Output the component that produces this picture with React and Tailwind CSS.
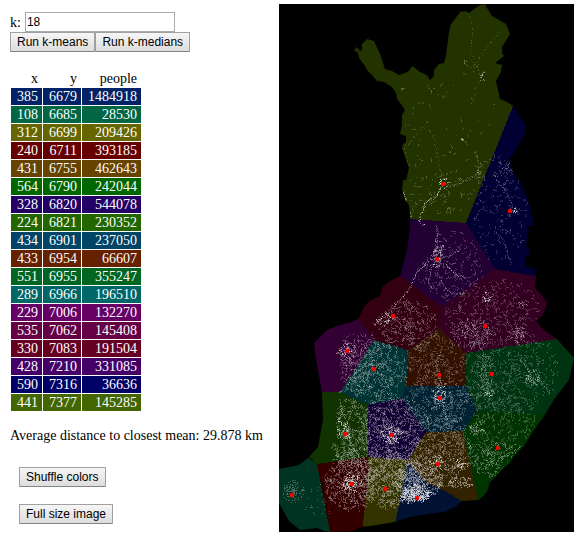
import { useState } from "react";

const MEANS = [
  { x: 385, y: 6679, people: 1484918, color: "bg-[#002266]" },
  { x: 108, y: 6685, people: 28530, color: "bg-[#006644]" },
  { x: 312, y: 6699, people: 209426, color: "bg-[#666600]" },
  { x: 240, y: 6711, people: 393185, color: "bg-[#660000]" },
  { x: 431, y: 6755, people: 462643, color: "bg-[#664400]" },
  { x: 564, y: 6790, people: 242044, color: "bg-[#006600]" },
  { x: 328, y: 6820, people: 544078, color: "bg-[#220066]" },
  { x: 224, y: 6821, people: 230352, color: "bg-[#226600]" },
  { x: 434, y: 6901, people: 237050, color: "bg-[#004466]" },
  { x: 433, y: 6954, people: 66607, color: "bg-[#662200]" },
  { x: 551, y: 6955, people: 355247, color: "bg-[#006622]" },
  { x: 289, y: 6966, people: 196510, color: "bg-[#006666]" },
  { x: 229, y: 7006, people: 132270, color: "bg-[#660066]" },
  { x: 535, y: 7062, people: 145408, color: "bg-[#660044]" },
  { x: 330, y: 7083, people: 191504, color: "bg-[#660022]" },
  { x: 428, y: 7210, people: 331085, color: "bg-[#440066]" },
  { x: 590, y: 7316, people: 36636, color: "bg-[#000066]" },
  { x: 441, y: 7377, people: 145285, color: "bg-[#446600]" },
];

const BORDER =
  "367,39 374,41 380,54 385,69 392,71 399,75 405,73 409,71 412,66 415,68 420,72 427,75 430,80 434,76 434,70 439,64 444,63 446,55 448,40 449,32 451,24 455,19 460,12 465,11 469,13 474,9 480,5 485,4 487,8 492,16 499,20 506,24 510,34 502,47 502,53 504,56 495,63 502,65 501,72 496,81 498,90 500,99 507,102 513,106 520,118 526,125 526,132 517,148 509,160 512,170 517,180 519,180 527,197 530,208 534,224 528,227 529,232 527,238 526,247 530,248 530,253 525,258 526,266 535,269 536,276 535,288 537,290 542,295 547,302 546,308 542,316 536,321 542,328 548,333 557,339 564,347 574,358 572,367 569,380 555,398 544,416 534,430 524,446 514,456 510,463 505,467 490,482 487,492 479,500 462,501 455,507 444,512 427,514 410,517 394,522 377,525 362,527 352,531 330,532 324,531 317,528 300,530 289,521 279,503 279,469 299,465 309,457 318,447 323,420 322,392 319,375 316,360 314,343 327,330 337,326 352,322 358,319 365,305 371,300 380,296 382,288 388,282 400,276 407,250 410,225 410,218 409,205 405,200 402,190 403,180 406,180 409,168 402,148 403,144 406,142 406,136 400,134 402,125 402,115 405,110 401,104 397,99 396,93 392,87 384,82 377,81 372,75 367,70 365,66 359,58 358,53 354,50 357,47 360,51 362,50 362,44";

const CELLS = [
  ["#223300", "340,20 340,219 410,219 466,223 513,106 540,4 440,4"],
  ["#000033", "513,106 466,223 495,269 550,279 550,106"],
  ["#220033", "390,218 410,219 466,223 495,269 442,307 400,276 390,270"],
  ["#330022", "495,269 550,279 570,337 557,339 466,353 439,328 442,307"],
  ["#330011", "395,270 400,276 442,307 439,328 408,350 374,340 358,319 340,300"],
  ["#330033", "358,319 374,340 340,392 310,392 300,320 340,310"],
  ["#003333", "374,340 408,350 406,386 402,398 368,405 340,392"],
  ["#331100", "408,350 439,328 466,353 466,386 406,386"],
  ["#003311", "466,353 557,339 577,336 577,416 477,412 466,386"],
  ["#002233", "406,386 466,386 477,411 463,431 426,432 402,398"],
  ["#110033", "402,398 426,432 407,461 368,457 368,405"],
  ["#113300", "310,392 340,392 368,405 368,457 317,464 309,457 300,450"],
  ["#003322", "279,460 305,455 317,464 330,532 279,532"],
  ["#330000", "317,464 368,457 369,470 362,532 330,532"],
  ["#333300", "368,457 407,460 404,480 394,532 362,532 369,470"],
  ["#001133", "407,461 427,483 447,492 462,501 462,530 394,530 404,480"],
  ["#332200", "426,432 463,431 479,503 462,501 447,492 427,483 407,461"],
  ["#003300", "463,431 477,411 577,416 577,500 479,503"],
];

const SETTLED_LAND =
  "399,75 455,15 485,4 515,26 505,106 526,125 535,224 535,269 548,302 537,321 574,358 569,380 544,416 514,456 490,482 487,487 450,489 432,502 412,505 390,510 365,515 345,513 325,497 324,477 333,464 330,449 337,431 334,393 334,370 337,340 358,332 371,333 371,324 385,311 405,292 410,277 424,261 436,247 433,231 419,225 410,217 405,200 402,190 409,168 402,148 402,115";

const CENTERS = [
  [443, 184], [510, 211], [437, 259], [393, 316], [485, 326], [347, 351],
  [374, 369], [439, 375], [492, 374], [440, 398], [345, 434], [392, 435],
  [498, 448], [438, 464], [292, 495], [352, 484], [385, 489], [417, 498],
];

// Population spread: x, y, radius x, radius y, specks, brightness
const CLUSTERS = [
  [450, 130, 48, 60, 170, 0.26], [435, 195, 35, 24, 230, 0.28],
  [479, 76, 3, 4, 20, 0.6], [406, 88, 3, 4, 8, 0.4], [469, 63, 8, 5, 14, 0.4],
  [478, 173, 4, 6, 24, 0.5], [461, 138, 2, 4, 10, 0.6], [444, 182, 6, 5, 28, 0.9],
  [500, 207, 27, 55, 460, 0.26], [513, 210, 4, 5, 20, 0.8], [502, 168, 10, 7, 50, 0.4],
  [448, 263, 34, 34, 560, 0.28], [436, 253, 7, 14, 150, 0.6],
  [490, 310, 48, 35, 950, 0.27], [473, 333, 20, 15, 420, 0.38], [486, 298, 5, 5, 45, 0.7],
  [516, 332, 8, 10, 90, 0.5], [524, 303, 5, 3, 25, 0.5],
  [408, 325, 30, 25, 750, 0.33], [381, 318, 11, 7, 90, 0.6],
  [356, 359, 17, 30, 580, 0.33], [346, 350, 8, 8, 100, 0.65],
  [375, 371, 34, 30, 1250, 0.36], [436, 360, 28, 25, 700, 0.29],
  [435, 402, 32, 28, 1000, 0.34], [439, 395, 8, 10, 100, 0.7],
  [508, 370, 50, 42, 1500, 0.27], [484, 373, 9, 23, 180, 0.4],
  [532, 377, 8, 9, 90, 0.55], [490, 393, 4, 4, 30, 0.8],
  [488, 424, 47, 42, 1300, 0.27], [493, 458, 20, 20, 480, 0.36], [475, 427, 8, 8, 90, 0.55],
  [350, 433, 20, 35, 1150, 0.35], [344, 431, 6, 10, 115, 0.68],
  [389, 430, 30, 37, 1800, 0.38], [391, 434, 11, 10, 200, 0.7],
  [438, 450, 33, 34, 1600, 0.35], [437, 461, 5, 7, 60, 0.75],
  [350, 479, 27, 31, 1600, 0.39], [351, 482, 10, 9, 190, 0.75],
  [389, 480, 30, 29, 1950, 0.4], [418, 479, 24, 20, 1300, 0.5],
  [416, 493, 15, 9, 480, 0.85], [460, 465, 7, 5, 70, 0.7], [461, 482, 12, 6, 130, 0.6],
];

// Brightly populated river valleys, roads and rail corridors
const VALLEYS = [
  [0.6, "411,217 407,209 405,199 403,192"],
  [0.7, "424,225 418,221 422,212 425,203 431,199 436,196 440,187 444,183"],
  [0.33, "444,183 450,186 458,184 466,179 477,174 479,162 474,150"],
  [0.22, "469,14 472,30 471,50 480,75 475,93 471,105"],
  [0.22, "474,70 483,50 493,39 500,30"],
  [0.28, "409,168 404,148 414,135 421,128 430,130 435,144 437,160 442,177"],
  [0.5, "437,259 434,243 437,234 436,225"],
  [0.55, "437,259 446,266 456,274 467,278"],
  [0.48, "437,259 450,255 460,249"],
  [0.48, "437,259 430,269 428,281 431,292"],
  [0.48, "437,259 437,272 445,289 455,294 465,292"],
  [0.55, "436,250 428,261 416,273 411,285 403,295 396,304 387,313 381,318 373,325"],
  [0.36, "404,297 413,306 421,319 429,328 433,340"],
  [0.36, "387,313 396,321 406,328 414,337"],
  [0.34, "378,322 389,330 403,334 413,345"],
  [0.4, "371,333 375,344 371,355 362,367 348,382"],
  [0.4, "373,368 386,361 390,348 387,335"],
  [0.4, "374,369 383,377 390,390 392,403"],
  [0.4, "374,369 360,374 349,388 338,393"],
  [0.4, "473,331 480,346 484,360 486,378 489,394"],
  [0.36, "440,398 455,394 467,393 479,396 490,393"],
  [0.45, "440,398 440,380 436,362 441,350"],
  [0.42, "440,398 444,413 449,428 445,440 443,454 438,464"],
  [0.5, "392,435 392,447 389,460 379,473 368,484 352,484"],
  [0.5, "392,435 403,432 414,436"],
  [0.45, "392,435 389,421 383,413 373,408"],
  [0.48, "345,434 352,446 358,454 360,466"],
  [0.48, "345,434 336,427 342,412 339,399"],
  [0.48, "392,435 395,449 404,461 412,473 417,497"],
  [0.45, "352,484 369,487 385,491 402,490 417,498"],
  [0.48, "417,498 428,491 439,485 454,486 466,484"],
  [0.4, "438,464 429,453 424,443"],
  [0.4, "438,464 447,469 461,466"],
  [0.48, "496,459 507,455 515,450 529,439"],
  [0.42, "532,377 526,367 519,359"],
  [0.38, "532,377 543,385 551,393"],
  [0.36, "513,210 509,198 502,187 493,173"],
  [0.3, "494,231 503,240 511,264"],
  [0.34, "504,315 514,332 523,341 538,343"],
];

function createRandom(seed) {
  let s = seed;
  return () => {
    s = (s * 1664525 + 1013904223) >>> 0;
    return s / 4294967296;
  };
}

function buildSpecks() {
  const random = createRandom(1729);
  const layers = ["", "", "", "", ""];
  const add = (x, y, light) => {
    const level = Math.max(0, Math.min(4, Math.floor(light * 5)));
    layers[level] += `M${Math.round(x)} ${Math.round(y)}h1v1h-1z`;
  };
  CLUSTERS.forEach(([cx, cy, rx, ry, count, light]) => {
    let left = count;
    while (left > 0) {
      const angle = random() * Math.PI * 2;
      const radius = Math.pow(random(), 0.56);
      let x = cx + Math.cos(angle) * radius * rx;
      let y = cy + Math.sin(angle) * radius * ry;
      let heading = random() * Math.PI * 2;
      const length = Math.min(left, 1 + Math.floor(random() * 5));
      for (let i = 0; i < length; i += 1) {
        add(x, y, light * (0.2 + random() * 1.15));
        heading += random() * 2 - 1;
        x += Math.cos(heading);
        y += Math.sin(heading);
      }
      left -= length;
    }
  });
  VALLEYS.forEach(([light, line]) => {
    const points = line.split(" ").map((p) => p.split(",").map(Number));
    for (let i = 1; i < points.length; i += 1) {
      const [ax, ay] = points[i - 1];
      const [bx, by] = points[i];
      const steps = Math.ceil(Math.hypot(bx - ax, by - ay) * (light < 0.3 ? 0.4 : 1.1));
      for (let j = 0; j < steps; j += 1) {
        const t = j / steps;
        add(
          ax + (bx - ax) * t + random() * 2 - 1,
          ay + (by - ay) * t + random() * 2 - 1,
          light * (0.5 + random() * 0.7)
        );
      }
    }
  });
  return layers;
}

function buildIslands() {
  const random = createRandom(77);
  let path = "";
  for (let i = 0; i < 150; i += 1) {
    const angle = random() * Math.PI * 2;
    const radius = random();
    const x = Math.round(293 + Math.cos(angle) * radius * 11);
    const y = Math.round(491 + Math.sin(angle) * radius * 12);
    path += `M${x} ${y}h1v1h-1z`;
  }
  for (let i = 0; i < 28; i += 1) {
    const x = Math.round(303 + random() * 28);
    const y = Math.round(482 + random() * 33);
    path += `M${x} ${y}h1v1h-1z`;
  }
  return path;
}

const SPECKS = buildSpecks();
const ISLANDS = buildIslands();
const SPECK_OPACITY = [0.13, 0.24, 0.38, 0.56, 0.8];

function ClusterMap() {
  return (
    <svg
      viewBox="279 4 295 528"
      className="ml-auto mr-[3px] mt-1 block w-[295px] shrink-0 bg-black"
      role="img"
      aria-label="Population clusters in Finland"
    >
      <defs>
        <clipPath id="border">
          <polygon points={BORDER} />
        </clipPath>
        <clipPath id="settled">
          <polygon points={SETTLED_LAND} />
        </clipPath>
      </defs>
      <g clipPath="url(#border)">
        <g shapeRendering="crispEdges">
          {CELLS.map(([fill, points]) => (
            <polygon key={fill} points={points} fill={fill} />
          ))}
        </g>
        <g clipPath="url(#settled)">
          {SPECKS.map((d, i) => (
            <path key={i} d={d} fill="#e4e4e4" fillOpacity={SPECK_OPACITY[i]} />
          ))}
        </g>
        <path d={ISLANDS} fill="#e4e4e4" fillOpacity="0.3" />
      </g>
      <g fill="#ff0000">
        {CENTERS.map(([x, y]) => (
          <rect key={`${x}-${y}`} x={x - 2} y={y - 2} width="4" height="4" rx="1" />
        ))}
      </g>
    </svg>
  );
}

function Button({ children }) {
  return (
    <button
      type="button"
      className="block h-5 rounded-[1px] border border-[#a0a0a0] border-b-[#858585] bg-linear-to-b from-[#f6f6f6] to-[#dddddd] px-[6px] font-['Liberation_Sans',Arial,sans-serif] text-[12px] leading-[17px] text-black"
    >
      {children}
    </button>
  );
}

export default function App() {
  const [k, setK] = useState("18");

  return (
    <main className="flex items-start bg-white font-['Liberation_Serif','Times_New_Roman',serif] text-[14px] leading-[17px] text-black">
      <section className="shrink-0 pl-[10px] pt-3">
        <div className="flex items-center gap-1">
          <label htmlFor="k">k:</label>
          <input
            id="k"
            type="text"
            value={k}
            onChange={(e) => setK(e.target.value)}
            className="h-5 w-[150px] border border-[#a9a9a9] bg-white px-px font-['Liberation_Sans',Arial,sans-serif] text-[12px] leading-4 outline-none"
          />
        </div>
        <div className="flex">
          <Button>Run k-means</Button>
          <Button>Run k-medians</Button>
        </div>

        <table className="mt-[17px] border-separate border-spacing-px text-right">
          <thead>
            <tr>
              <th scope="col" className="py-0 pl-[6px] pr-1 text-right font-normal">x</th>
              <th scope="col" className="py-0 pl-[6px] pr-1 text-right font-normal">y</th>
              <th scope="col" className="py-0 pl-[6px] pr-1 text-right font-normal">people</th>
            </tr>
          </thead>
          <tbody>
            {MEANS.map((mean) => (
              <tr key={mean.color} className="text-white">
                <td className={`py-0 pl-[6px] pr-1 ${mean.color}`}>{mean.x}</td>
                <td className={`py-0 pl-[6px] pr-1 ${mean.color}`}>{mean.y}</td>
                <td className={`py-0 pl-[6px] pr-1 ${mean.color}`}>{mean.people}</td>
              </tr>
            ))}
          </tbody>
        </table>

        <p className="mt-[15px]">Average distance to closest mean: 29.878 km</p>

        <div className="mt-[23px] flex flex-col items-start gap-[17px] pl-[9px]">
          <Button>Shuffle colors</Button>
          <Button>Full size image</Button>
        </div>
      </section>

      <ClusterMap />
    </main>
  );
}
